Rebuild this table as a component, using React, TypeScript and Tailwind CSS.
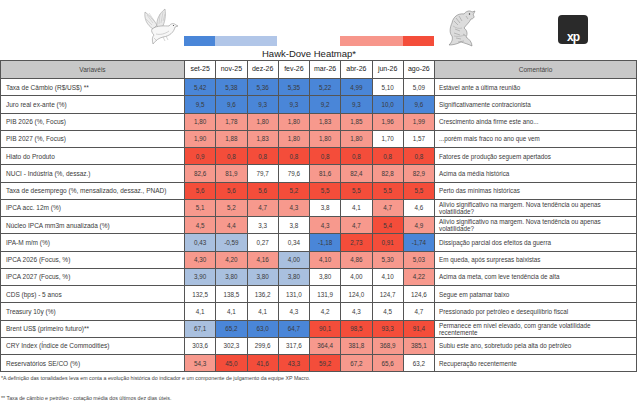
import React from 'react';

type Tone = 'B' | 'b' | 'W' | 'r' | 'R';

const TONE: Record<Tone, string> = {
  B: 'bg-[#4a86d8]',
  b: 'bg-[#a9c0df]',
  W: 'bg-white',
  r: 'bg-[#f7998d]',
  R: 'bg-[#f44d3a]',
};

const MONTHS = ['set-25', 'nov-25', 'dez-26', 'fev-26', 'mar-26', 'abr-26', 'jun-26', 'ago-26'];

const ROWS: { label: string; values: string[]; tones: string; comment: string }[] = [
  { label: 'Taxa de Câmbio (R$/US$) **', values: ['5,42', '5,38', '5,36', '5,35', '5,22', '4,99', '5,10', '5,09'], tones: 'BBBBBBWW', comment: 'Estável ante a última reunião' },
  { label: 'Juro real ex-ante (%)', values: ['9,5', '9,6', '9,3', '9,3', '9,2', '9,3', '10,0', '9,6'], tones: 'BBBBBBBB', comment: 'Significativamente contracionista' },
  { label: 'PIB 2026 (%, Focus)', values: ['1,80', '1,78', '1,80', '1,80', '1,83', '1,85', '1,96', '1,99'], tones: 'rrrrrrrr', comment: 'Crescimento ainda firme este ano...' },
  { label: 'PIB 2027 (%, Focus)', values: ['1,90', '1,88', '1,83', '1,80', '1,80', '1,80', '1,70', '1,57'], tones: 'rrrrrrWW', comment: '...porém mais fraco no ano que vem' },
  { label: 'Hiato do Produto', values: ['0,9', '0,8', '0,8', '0,8', '0,8', '0,8', '0,8', '0,8'], tones: 'RRRRRRRR', comment: 'Fatores de produção seguem apertados' },
  { label: 'NUCI - Indústria (%, dessaz.)', values: ['82,6', '81,9', '79,7', '79,6', '81,6', '82,4', '82,8', '82,9'], tones: 'rrWWrrrr', comment: 'Acima da média histórica' },
  { label: 'Taxa de desemprego (%, mensalizado, dessaz., PNAD)', values: ['5,6', '5,6', '5,6', '5,2', '5,5', '5,5', '5,5', '5,5'], tones: 'RRRRRRRR', comment: 'Perto das mínimas históricas' },
  { label: 'IPCA acc. 12m (%)', values: ['5,1', '5,2', '4,7', '4,3', '3,8', '4,1', '4,7', '4,6'], tones: 'rrrrWWrW', comment: 'Alívio significativo na margem. Nova tendência ou apenas volatilidade?' },
  { label: 'Núcleo IPCA mm3m anualizada (%)', values: ['4,5', '4,4', '3,3', '3,8', '4,3', '4,7', '5,4', '4,9'], tones: 'rrWWrrRr', comment: 'Alívio significativo na margem. Nova tendência ou apenas volatilidade?' },
  { label: 'IPA-M m/m (%)', values: ['0,43', '-0,59', '0,27', '0,34', '-1,18', '2,73', '0,91', '-1,74'], tones: 'bbWWBRRB', comment: 'Dissipação parcial dos efeitos da guerra' },
  { label: 'IPCA 2026 (Focus, %)', values: ['4,30', '4,20', '4,16', '4,00', '4,10', '4,86', '5,30', '5,03'], tones: 'rrrbrrrr', comment: 'Em queda, após surpresas baixistas' },
  { label: 'IPCA 2027 (Focus, %)', values: ['3,90', '3,80', '3,80', '3,80', '3,80', '4,00', '4,10', '4,22'], tones: 'bbbbWWWr', comment: 'Acima da meta, com leve tendência de alta' },
  { label: 'CDS (bps) - 5 anos', values: ['132,5', '138,5', '136,2', '131,0', '131,9', '124,0', '124,7', '124,6'], tones: 'WWWWWWWW', comment: 'Segue em patamar baixo' },
  { label: 'Treasury 10y (%)', values: ['4,1', '4,1', '4,1', '4,3', '4,2', '4,3', '4,5', '4,7'], tones: 'WWWWWWWW', comment: 'Pressionado por petróleo e desequilíbrio fiscal' },
  { label: 'Brent US$ (primeiro futuro)**', values: ['67,1', '65,2', '63,0', '64,7', '90,1', '98,5', '93,3', '91,4'], tones: 'bBBBRRRR', comment: 'Permanece em nível elevado, com grande volatilidade recentemente' },
  { label: 'CRY Index (Índice de Commodities)', values: ['303,6', '302,3', '299,6', '317,6', '364,4', '381,8', '368,9', '385,1'], tones: 'WWWWrrrr', comment: 'Subiu este ano, sobretudo pela alta do petróleo' },
  { label: 'Reservatórios SE/CO (%)', values: ['54,3', '45,0', '41,6', '43,3', '59,2', '67,2', '65,6', '63,2'], tones: 'rRRRRrrW', comment: 'Recuperação recentemente' },
];

const Dove = () => (
  <svg width="36" height="38" viewBox="0 0 36 38">
    {/* wings */}
    <path d="M10 21 C4 17 1 11 2 4 C7 8 11 12 14 17 Z" fill="#ededed" stroke="#a0a0a0" strokeWidth="0.6" />
    <path d="M14 19 C13 11 17 5 22 1 C23 8 22 14 19 20 Z" fill="#e9e9e9" stroke="#a0a0a0" strokeWidth="0.6" />
    <path d="M4 7 L10 15 M6 5 L12 14 M3 11 L9 17 M17 6 L16 16 M20 4 L18 15 M22 6 L20 13" stroke="#bdbdbd" strokeWidth="0.5" />
    {/* body */}
    <path d="M9 21 C14 17 22 18 26 18 C28 15 31 15 33 17 L35 18 L32 19 C31 24 27 28 20 29 C16 30 13 32 10 36 C9 32 9 29 11 27 C9 25 8 23 9 21 Z" fill="#f7f7f7" stroke="#939393" strokeWidth="0.6" />
    <path d="M13 26 C17 27 22 26 26 23 M20 29 L22 33 M23 28 L25 32 M11 30 L14 33" stroke="#ababab" strokeWidth="0.5" fill="none" />
    <circle cx="30.5" cy="17.5" r="0.6" fill="#444" />
  </svg>
);

const Hawk = () => (
  <svg width="34" height="38" viewBox="0 0 34 38">
    <path d="M8 14 C9 8 14 4 20 5 C22 2 26 1 28 3 L31 2 L29 6 C31 7 30 10 27 10 C25 14 22 16 20 19 C23 21 24 25 22 28 C25 30 28 33 28 37 C24 35 20 34 17 33 C13 35 9 36 5 36 C8 33 9 30 8 27 C5 24 6 18 8 14 Z" fill="#dcdcdc" stroke="#808080" strokeWidth="0.6" />
    <path d="M10 12 L14 16 M12 9 L16 14 M15 7 L18 12 M11 20 L16 22 M10 24 L16 26 M12 29 L17 30 M19 25 L22 27 M14 33 L20 32 M22 7 L24 10" stroke="#8f8f8f" strokeWidth="0.5" fill="none" />
    <path d="M9 17 C12 19 15 20 18 19 M10 27 C14 28 18 27 21 26" stroke="#a5a5a5" strokeWidth="0.5" fill="none" />
    <circle cx="25.5" cy="5" r="0.7" fill="#333" />
  </svg>
);

const XpLogo = () => (
  <div className="w-[30px] h-[29px] rounded-[4px] bg-[#2a2a2a] flex items-end justify-center">
    <span className="text-white font-black text-[12px] leading-[12px] tracking-[-1px] font-['Liberation_Sans',sans-serif] mb-[1px] lowercase">xp</span>
  </div>
);

export default function App() {
  return (
    <div className="w-[639px] h-[405px] bg-white font-['Liberation_Sans',Arial,sans-serif] text-[#2b2b2b] overflow-hidden">
      {/* top strip: birds, legend bars, logo */}
      <div className="flex h-[48px]">
        <div className="w-[184px] flex items-end justify-end pr-[5px] pb-[2px]">
          <Dove />
        </div>
        <div className="w-[250px] flex items-end justify-between pb-[2px]">
          <div className="flex h-[10px] w-[93px]">
            <div className="w-[31px] bg-[#4a86d8]" />
            <div className="flex-1 bg-[#b1c6e8]" />
          </div>
          <div className="flex h-[10px] w-[94px]">
            <div className="flex-1 bg-[#f7968b]" />
            <div className="w-[31px] bg-[#f44d3a]" />
          </div>
        </div>
        <div className="flex-1 flex items-end">
          <div className="ml-[10px] pb-[1px]">
            <Hawk />
          </div>
          <div className="ml-[80px] pb-[4px]">
            <XpLogo />
          </div>
        </div>
      </div>

      <div className="flex h-[12px]">
        <div className="w-[184px]" />
        <div className="w-[250px] text-center text-[9.5px] leading-[12px] font-medium text-[#222]">Hawk-Dove Heatmap*</div>
      </div>

      <table className="table-fixed border-collapse w-[636px]">
        <colgroup>
          <col className="w-[184px]" />
          {MONTHS.map((m) => (
            <col key={m} className="w-[31.25px]" />
          ))}
          <col className="w-[202px]" />
        </colgroup>
        <thead>
          <tr className="h-[18px]">
            <th className="border border-[#555] bg-[#c8c8c8] text-[6.5px] font-normal text-[#444]">Variavéis</th>
            {MONTHS.map((m) => (
              <th key={m} className="border border-[#555] bg-white text-[7px] font-normal text-[#222]">{m}</th>
            ))}
            <th className="border border-[#555] bg-[#c8c8c8] text-[6.5px] font-normal text-[#444]">Comentário</th>
          </tr>
        </thead>
        <tbody>
          {ROWS.map((row) => (
            <tr key={row.label} className="h-[17.25px]">
              <td className="border border-[#555] pl-[5px] text-[6.5px] leading-[7px] text-[#3a3a3a] whitespace-nowrap">{row.label}</td>
              {row.values.map((v, i) => (
                <td key={i} className={`border border-[#555] text-center text-[6.3px] leading-[7px] text-[#3a3a3a] ${TONE[row.tones[i] as Tone]}`}>
                  {v}
                </td>
              ))}
              <td className="border border-[#555] pl-[4px] pr-[20px] text-[6.3px] leading-[7px] text-[#3a3a3a]">{row.comment}</td>
            </tr>
          ))}
        </tbody>
      </table>

      <div className="pl-[1px] text-[5.3px] leading-[7px] text-[#444]">
        <p className="mt-[3px]">*A definição das tonalidades leva em conta a evolução histórica do indicador e um componente de julgamento da equipe XP Macro.</p>
        <p className="mt-[13px]">** Taxa de câmbio e petróleo - cotação média dos últimos dez dias úteis.</p>
      </div>
    </div>
  );
}
